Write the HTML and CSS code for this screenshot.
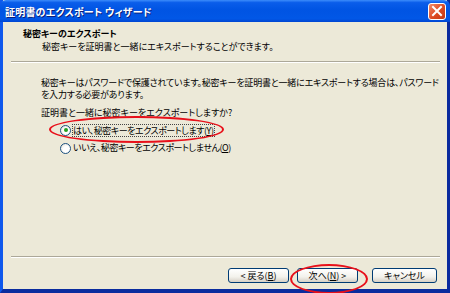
FILE: index.html
```html
<!DOCTYPE html>
<html lang="ja">
<head>
  <meta charset="UTF-8" />
  <title>証明書のエクスポート ウィザード</title>
  <link rel="stylesheet" href="styles.css">
</head>
<body>
  <div class="window">
    <div class="titlebar">
      <span class="title">証明書のエクスポート ウィザード</span>
      <span class="close">
        <svg width="12" height="12" viewBox="0 0 12 12"><path d="M2 2 L10 10 M10 2 L2 10" stroke="#fff" stroke-width="2" stroke-linecap="square"/></svg>
      </span>
    </div>

    <div class="client">
      <div class="header">
        <div class="head-title">秘密キーのエクスポート</div>
        <div class="head-sub">秘密キーを証明書と一緒にエキスポートすることができます。</div>
      </div>
      <div class="etched"></div>

      <div class="content">
        <p class="desc">秘密キーはパスワードで保護されています。秘密キーを証明書と一緒にエキスポートする場合は、パスワード<br>を入力する必要があります。</p>
        <p class="question">証明書と一緒に秘密キーをエクスポートしますか?</p>
        <div class="options">
          <label class="radio-row marked">
            <span class="radio checked"></span>
            <span class="focus">はい、秘密キーをエクスポートします(<u>Y</u>)</span>
          </label>
          <label class="radio-row">
            <span class="radio"></span>
            <span>いいえ、秘密キーをエクスポートしません(<u>O</u>)</span>
          </label>
        </div>
      </div>

      <div class="etched bottom"></div>
      <div class="buttons">
        <button class="btn">&lt; 戻る(<u>B</u>)</button>
        <button class="btn marked-btn">次へ(<u>N</u>) &gt;</button>
        <button class="btn cancel">キャンセル</button>
      </div>
    </div>
  </div>
</body>
</html>
```

FILE: styles.css
```css
* {
  box-sizing: border-box;
}
html, body {
  margin: 0;
  padding: 0;
  width: 450px;
  height: 293px;
  overflow: hidden;
  background: #ECE9D8;
}
body {
  font-family: "Noto Sans CJK JP", "Noto Sans", sans-serif;
  font-feature-settings: "palt";
  font-size: 9px;
  color: #000;
}
.window {
  width: 450px;
  height: 293px;
  display: flex;
  flex-direction: column;
  background: #ECE9D8;
  border-left: 3px solid #0F58EC;
  border-right: 3px solid #0A2A9E;
  border-bottom: 4px solid #0A2C9E;
}
.titlebar {
  height: 22px;
  margin: 0 -3px;
  display: flex;
  align-items: center;
  justify-content: space-between;
  padding: 0 4px 0 5px;
  background: linear-gradient(#3C8CFB 0%, #0A5DEA 12%, #0054E3 45%, #0157E6 85%, #0045D2 100%);
  border-radius: 6px 6px 0 0;
}
.title {
  color: #fff;
  font-weight: 700;
  font-size: 10px;
  letter-spacing: 0.2px;
  text-shadow: 1px 1px 0 #0A1E78;
}
.close {
  width: 18px;
  height: 17px;
  display: flex;
  align-items: center;
  justify-content: center;
  border: 1px solid #fff;
  border-radius: 3px;
  background: linear-gradient(135deg, #F08A6A, #DD4A22 55%, #C23A14);
}
.client {
  flex: 1;
  display: flex;
  flex-direction: column;
}
.header {
  height: 39px;
  padding: 6px 0 0 20px;
  display: flex;
  flex-direction: column;
  gap: 1px;
}
.head-title {
  font-weight: 700;
  height: 12px;
  line-height: 12px;
}
.head-sub {
  padding-left: 19px;
  height: 12px;
  line-height: 12px;
}
.etched {
  height: 2px;
  margin: 0 7px 0 8px;
  border-top: 1px solid #ACA899;
  border-bottom: 1px solid #fff;
}
.content {
  flex: 1;
  padding: 14px 0 0 38px;
  line-height: 12px;
}
.content p {
  margin: 0;
  white-space: nowrap;
}
.desc {
  letter-spacing: -0.2px;
}
.question {
  margin-top: 6px !important;
}
.options {
  margin-top: 5px;
  padding-left: 19px;
  display: flex;
  flex-direction: column;
  align-items: flex-start;
  gap: 6px;
  letter-spacing: -0.45px;
}
.radio-row {
  position: relative;
  display: flex;
  align-items: center;
  gap: 2px;
  height: 12px;
  white-space: nowrap;
}
.radio {
  width: 11px;
  height: 11px;
  border-radius: 50%;
  border: 1px solid #1C5180;
  background: radial-gradient(circle at 60% 60%, #fff 40%, #DCD9CE);
  display: flex;
  align-items: center;
  justify-content: center;
}
.radio.checked::after {
  content: "";
  width: 4px;
  height: 4px;
  border-radius: 50%;
  background: #21A121;
}
.focus {
  outline: 1px dotted #444;
  line-height: 11px;
}
.marked::before {
  content: "";
  position: absolute;
  left: -11px;
  right: -10px;
  top: -8px;
  bottom: -7px;
  border: 2px solid #E8101A;
  border-radius: 50%;
}
.etched.bottom {
  margin-bottom: 10px;
}
.buttons {
  height: 21px;
  display: flex;
  justify-content: flex-end;
  gap: 8px;
  padding-right: 10px;
  align-items: flex-start;
}
.btn {
  position: relative;
  width: 61px;
  height: 15px;
  padding: 0;
  font: inherit;
  font-size: 9px;
  line-height: 13px;
  color: #000;
  border: 1px solid #003C74;
  border-radius: 3px;
  background: linear-gradient(#FFFFFF, #F3F2EC 60%, #D6D0C5);
}
.btn.cancel {
  width: 65px;
  margin-left: 6px;
}
.marked-btn::before {
  content: "";
  position: absolute;
  left: -8px;
  top: -5px;
  width: 74px;
  height: 26px;
  border: 2px solid #E8101A;
  border-radius: 50%;
}
```
